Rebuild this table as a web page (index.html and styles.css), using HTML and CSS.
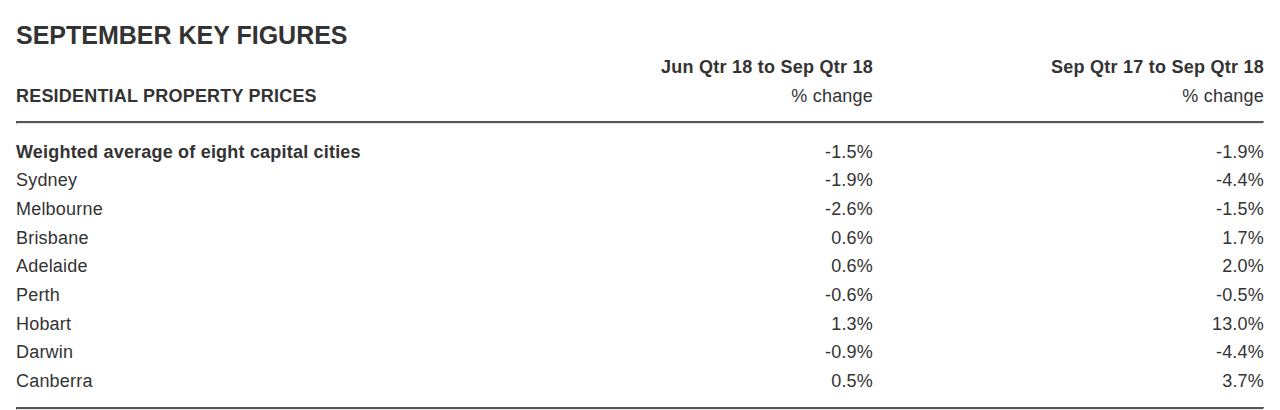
FILE: index.html
```html
<!DOCTYPE html>
<html lang="en">
<head>
<meta charset="utf-8">
<title>September Key Figures</title>
<link rel="stylesheet" href="styles.css">
</head>
<body>
<div class="page">
  <h1 class="title">SEPTEMBER KEY FIGURES</h1>
  <div class="grid head">
    <div class="cell"></div>
    <div class="cell num colhead">Jun Qtr 18 to Sep Qtr 18</div>
    <div class="cell num colhead">Sep Qtr 17 to Sep Qtr 18</div>
    <div class="cell section">RESIDENTIAL PROPERTY PRICES</div>
    <div class="cell num unit">% change</div>
    <div class="cell num unit">% change</div>
  </div>
  <hr class="rule">
  <div class="grid body">
    <div class="cell strong">Weighted average of eight capital cities</div><div class="cell num">-1.5%</div><div class="cell num">-1.9%</div>
    <div class="cell">Sydney</div><div class="cell num">-1.9%</div><div class="cell num">-4.4%</div>
    <div class="cell">Melbourne</div><div class="cell num">-2.6%</div><div class="cell num">-1.5%</div>
    <div class="cell">Brisbane</div><div class="cell num">0.6%</div><div class="cell num">1.7%</div>
    <div class="cell">Adelaide</div><div class="cell num">0.6%</div><div class="cell num">2.0%</div>
    <div class="cell">Perth</div><div class="cell num">-0.6%</div><div class="cell num">-0.5%</div>
    <div class="cell">Hobart</div><div class="cell num">1.3%</div><div class="cell num">13.0%</div>
    <div class="cell">Darwin</div><div class="cell num">-0.9%</div><div class="cell num">-4.4%</div>
    <div class="cell">Canberra</div><div class="cell num">0.5%</div><div class="cell num">3.7%</div>
  </div>
  <hr class="rule bottom">
</div>
</body>
</html>
```

FILE: styles.css
```css
html, body {
  margin: 0;
  padding: 0;
  background: #ffffff;
}
.page {
  padding: 20px 16px 0 16px;
  font-family: "Liberation Sans", Arial, sans-serif;
  color: #333333;
}
.title {
  margin: 0;
  font-size: 25px;
  line-height: 31px;
  font-weight: bold;
  color: #333333;
}
.grid {
  display: grid;
  grid-template-columns: 1fr 391px 391px;
}
.head {
  margin-top: 2px;
}
.cell {
  font-size: 18px;
  letter-spacing: 0.2px;
}
.num {
  text-align: right;
}
.colhead {
  font-weight: bold;
  letter-spacing: 0.25px;
  line-height: 28px;
}
.section {
  font-weight: bold;
  line-height: 30px;
}
.unit {
  line-height: 30px;
}
.rule {
  margin: 10px 0 0 0;
  height: 0;
  border-style: solid;
  border-width: 2px 1px 1px 1px;
  border-color: #555555 #e6e6e6 #e6e6e6 #555555;
}
.body {
  margin-top: 13.5px;
  grid-auto-rows: 28.7px;
}
.body .cell {
  line-height: 28.7px;
}
.strong {
  font-weight: bold;
}
.bottom {
  margin-top: 11.5px;
}
```
